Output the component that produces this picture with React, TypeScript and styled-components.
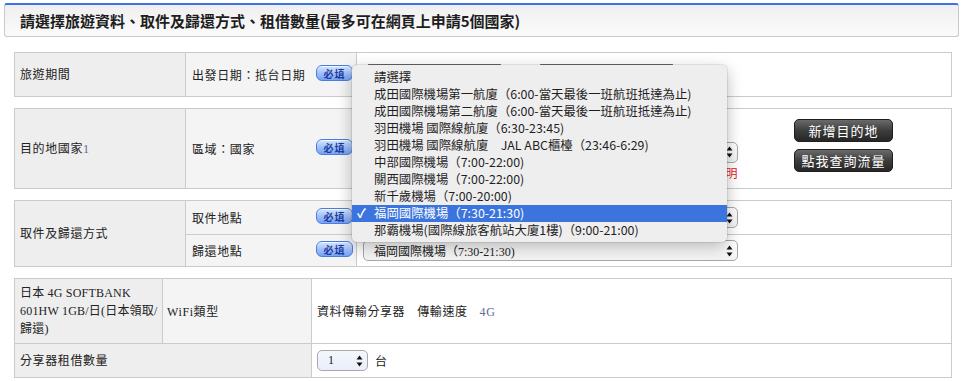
import React from "react";
import styled, { createGlobalStyle } from "styled-components";

const GlobalStyle = createGlobalStyle`
  body {
    margin: 0;
    background: #fff;
    color: #222;
    font-family: "Liberation Serif", "Noto Sans CJK TC", serif;
  }
`;

const Page = styled.div`
  position: relative;
  width: 964px;
  box-sizing: border-box;
  padding: 3px 5px 0 4px;
`;

const HeaderPanel = styled.div`
  height: 31px;
  display: flex;
  align-items: center;
  padding-left: 15px;
  border: 1px solid #c9c9c9;
  border-top: 2px solid #3d72ea;
  border-radius: 3px;
  background: linear-gradient(#efefef, #fbfbfb);
  font: bold 15px "Noto Sans CJK TC", sans-serif;
  color: #1e1e1e;
`;

const Tables = styled.div`
  display: flex;
  flex-direction: column;
  gap: 11px;
  margin: 15px 0 0 10px;
`;

const FormTable = styled.table`
  width: 938px;
  border-collapse: collapse;
  table-layout: fixed;
  font-size: 12px;
  letter-spacing: 0.6px;
`;

const Col = styled.col<{ $w?: number }>`
  ${({ $w }) => ($w ? `width: ${$w}px;` : "")}
`;

const Row = styled.tr<{ $h: number }>`
  height: ${({ $h }) => $h}px;
`;

const LabelCell = styled.td<{ $nowrap?: boolean }>`
  padding: 0 5px;
  border: 1px solid #cbcbcb;
  background: #eeeeee;
  line-height: 18px;
  ${({ $nowrap }) => ($nowrap ? "white-space: nowrap; letter-spacing: 0.2px;" : "")}
`;

const SubCell = styled.td<{ $pad?: number }>`
  padding: 0 3px 0 ${({ $pad }) => $pad ?? 6}px;
  border: 1px solid #cbcbcb;
  background: #f4f4f4;
`;

const ValueCell = styled.td`
  padding: 0 5px;
  border: 1px solid #cbcbcb;
  background: #fff;
`;

const SubInner = styled.div`
  display: flex;
  align-items: center;
  justify-content: space-between;
`;

const Muted = styled.span`
  color: #5d6c8c;
`;

const RequiredBadge = styled.span`
  width: 35px;
  height: 14px;
  margin-top: -3px;
  display: flex;
  align-items: center;
  justify-content: center;
  border: 1px solid #4a7de0;
  border-radius: 6px;
  background: linear-gradient(#d6e6ff, #9dbefa 55%, #77a3f4);
  box-shadow: inset 0 1px 0 rgba(255, 255, 255, 0.7);
  font: bold 10px "Noto Sans CJK TC", sans-serif;
  letter-spacing: 1px;
  color: #1d3c9c;
`;

const DateRow = styled.div`
  display: flex;
  gap: 39px;
  padding-left: 6px;
`;

const DateInput = styled.div`
  width: 133px;
  height: 21px;
  box-sizing: border-box;
  border: 1px solid #b8b8b8;
  border-top: 2px solid #6a6a6a;
`;

const SelectBox = styled.div<{ $w: number; $tint?: boolean }>`
  width: ${({ $w }) => $w}px;
  height: 21px;
  box-sizing: border-box;
  display: flex;
  align-items: center;
  justify-content: space-between;
  padding: 0 4px 0 10px;
  border: 1px solid #a9a9a9;
  border-radius: 5px;
  background: ${({ $tint }) =>
    $tint ? "linear-gradient(#f4f7fd, #e9eef9)" : "linear-gradient(#fff, #f3f3f3)"};
  font-size: 12px;
  letter-spacing: 0;
  color: #222;
`;

const Destination = styled.div`
  display: flex;
  align-items: center;
`;

const PickBlock = styled.div`
  display: flex;
  flex-direction: column;
  gap: 3px;
  margin-left: 1px;
`;

const Note = styled.div`
  width: 375px;
  text-align: right;
  font: 12px "Noto Sans CJK TC", sans-serif;
  line-height: 14px;
  color: #e5222e;
`;

const ButtonStack = styled.div`
  display: flex;
  flex-direction: column;
  gap: 7px;
  margin-left: 56px;
  margin-top: -6px;
`;

const DarkButton = styled.button`
  width: 99px;
  height: 23px;
  padding: 0;
  border: 1px solid #1f1f1f;
  border-radius: 5px;
  background: linear-gradient(#6b6b6b, #3d3d3d 50%, #262626);
  color: #fff;
  font: 13px "Noto Sans CJK TC", sans-serif;
  letter-spacing: 1px;
`;

const PickSelect = styled.div`
  padding-left: 1px;
`;

const Speed = styled.span`
  margin-left: 12px;
`;

const QtyRow = styled.div`
  display: flex;
  align-items: center;
  gap: 7px;
`;

const Menu = styled.div`
  position: absolute;
  left: 352px;
  top: 65px;
  width: 375px;
  padding: 4px 0 3px;
  border-radius: 5px;
  background: #efeeef;
  box-shadow: 0 0 0 1px rgba(0, 0, 0, 0.08), 0 5px 16px rgba(0, 0, 0, 0.28);
  font: 12.4px "Noto Sans CJK TC", sans-serif;
  color: #1f1f1f;
`;

const MenuItem = styled.div<{ $active?: boolean }>`
  position: relative;
  height: 17px;
  line-height: 17px;
  padding-left: 22px;
  white-space: nowrap;
  background: ${({ $active }) => ($active ? "#3a74dc" : "transparent")};
  color: ${({ $active }) => ($active ? "#fff" : "inherit")};
`;

const Check = styled.span`
  position: absolute;
  left: 5px;
  top: 0;
  font-weight: bold;
`;

const Stepper = () => (
  <svg width="7" height="12" viewBox="0 0 7 12">
    <path d="M3.5 0.5 L6.5 4.5 L0.5 4.5 Z" fill="#111" />
    <path d="M3.5 11.5 L6.5 7.5 L0.5 7.5 Z" fill="#111" />
  </svg>
);

const airports = [
  "請選擇",
  "成田國際機場第一航廈（6:00-當天最後一班航班抵達為止)",
  "成田國際機場第二航廈（6:00-當天最後一班航班抵達為止)",
  "羽田機場 國際線航廈（6:30-23:45)",
  "羽田機場 國際線航廈　JAL ABC櫃檯（23:46-6:29)",
  "中部國際機場（7:00-22:00)",
  "關西國際機場（7:00-22:00)",
  "新千歲機場（7:00-20:00)",
  "福岡國際機場（7:30-21:30)",
  "那霸機場(國際線旅客航站大廈1樓)（9:00-21:00)",
];

const Required = () => <RequiredBadge>必填</RequiredBadge>;

const MainCols = () => (
  <colgroup>
    <Col $w={171} />
    <Col $w={171} />
    <Col />
  </colgroup>
);

export default function App() {
  return (
    <Page>
      <GlobalStyle />
      <HeaderPanel>
        請選擇旅遊資料、取件及歸還方式、租借數量(最多可在網頁上申請5個國家)
      </HeaderPanel>

      <Tables>
        <FormTable>
          <MainCols />
          <tbody>
            <Row $h={44}>
              <LabelCell>旅遊期間</LabelCell>
              <SubCell>
                <SubInner>
                  出發日期：抵台日期
                  <Required />
                </SubInner>
              </SubCell>
              <ValueCell>
                <DateRow>
                  <DateInput />
                  <DateInput />
                </DateRow>
              </ValueCell>
            </Row>
          </tbody>
        </FormTable>

        <FormTable>
          <MainCols />
          <tbody>
            <Row $h={80}>
              <LabelCell>
                目的地國家<Muted>1</Muted>
              </LabelCell>
              <SubCell>
                <SubInner>
                  區域：國家
                  <Required />
                </SubInner>
              </SubCell>
              <ValueCell>
                <Destination>
                  <PickBlock>
                    {/* region + country selects sit under the open popup */}
                    <SelectBox $w={180}>
                      <span />
                      <Stepper />
                    </SelectBox>
                    <SelectBox $w={375}>
                      <span />
                      <Stepper />
                    </SelectBox>
                    <Note>請參閱說明</Note>
                  </PickBlock>
                  <ButtonStack>
                    <DarkButton>新增目的地</DarkButton>
                    <DarkButton>點我查詢流量</DarkButton>
                  </ButtonStack>
                </Destination>
              </ValueCell>
            </Row>
          </tbody>
        </FormTable>

        <FormTable>
          <MainCols />
          <tbody>
            <Row $h={34}>
              <LabelCell rowSpan={2}>取件及歸還方式</LabelCell>
              <SubCell>
                <SubInner>
                  取件地點
                  <Required />
                </SubInner>
              </SubCell>
              <ValueCell>
                <PickSelect>
                  <SelectBox $w={375}>
                    <span />
                    <Stepper />
                  </SelectBox>
                </PickSelect>
              </ValueCell>
            </Row>
            <Row $h={32}>
              <SubCell>
                <SubInner>
                  歸還地點
                  <Required />
                </SubInner>
              </SubCell>
              <ValueCell>
                <PickSelect>
                  <SelectBox $w={375}>
                    福岡國際機場（7:30-21:30)
                    <Stepper />
                  </SelectBox>
                </PickSelect>
              </ValueCell>
            </Row>
          </tbody>
        </FormTable>

        <FormTable>
          <colgroup>
            <Col $w={148} />
            <Col $w={149} />
            <Col />
          </colgroup>
          <tbody>
            <Row $h={65}>
              <LabelCell $nowrap>
                日本 4G SOFTBANK
                <br />
                601HW 1GB/日(日本領取/
                <br />
                歸還)
              </LabelCell>
              <SubCell $pad={4}>WiFi類型</SubCell>
              <ValueCell>
                資料傳輸分享器<Speed>傳輸速度</Speed>
                <Speed>
                  <Muted>4G</Muted>
                </Speed>
              </ValueCell>
            </Row>
            <Row $h={34}>
              <LabelCell colSpan={2}>分享器租借數量</LabelCell>
              <ValueCell>
                <QtyRow>
                  <SelectBox $w={51} $tint>
                    1
                    <Stepper />
                  </SelectBox>
                  台
                </QtyRow>
              </ValueCell>
            </Row>
          </tbody>
        </FormTable>
      </Tables>

      <Menu>
        {airports.map((name, i) => (
          <MenuItem key={name} $active={i === 8}>
            {i === 8 && <Check>✓</Check>}
            {name}
          </MenuItem>
        ))}
      </Menu>
    </Page>
  );
}
